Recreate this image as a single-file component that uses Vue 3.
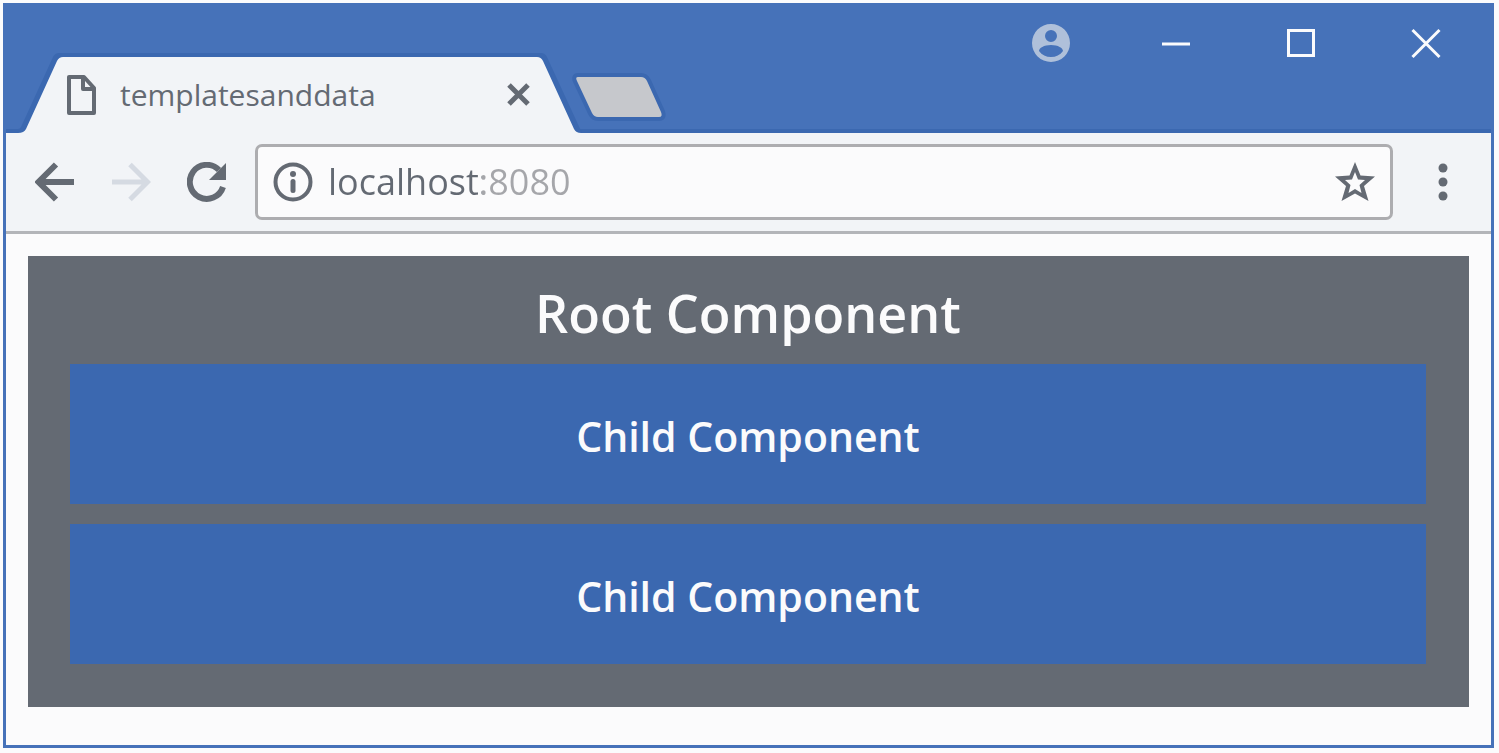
<script setup>
import { ref } from 'vue'

const address = ref('localhost:8080')
const children = ['Child Component', 'Child Component']
</script>

<template>
  <div class="window">
    <header class="titlebar">
      <div class="tab">
        <svg class="tab-shape" viewBox="0 0 564 81" preserveAspectRatio="none" aria-hidden="true">
          <path class="tab-edge" d="M0 81 V77 H12 Q14 77 15 75 L47 5 Q49 1 53 1 H535 Q539 1 541 5 L576 81 Z" />
          <path class="tab-fill" d="M12 81 Q18 81 20 77 L51 9 Q53 5 57 5 H531 Q535 5 537 9 L568 77 Q570 81 575 81 Z" />
        </svg>
        <svg class="page-icon" viewBox="0 0 30 40" aria-hidden="true">
          <path d="M3 2 H18 L28 13 V38 H3 Z" />
          <path d="M17 3 V14 H27" />
        </svg>
        <span class="tab-title">templatesanddata</span>
        <button class="plain tab-close" type="button" aria-label="Close tab">
          <svg viewBox="0 0 24 24"><path d="M2 2 L21 21 M21 2 L2 21" /></svg>
        </button>
      </div>
      <button class="plain new-tab" type="button" aria-label="New tab">
        <svg viewBox="0 0 96 54">
          <path d="M8 7 H71 Q75 7 77 11 L91 42 Q93 47 89 47 H28 Q24 47 22 43 L7 11 Q5 7 8 7 Z" />
        </svg>
      </button>
      <div class="controls">
        <button class="plain control" type="button" aria-label="Profile">
          <svg viewBox="0 0 38 38">
            <path class="person" fill-rule="evenodd" d="M19 0 A19 19 0 1 1 19 38 A19 19 0 1 1 19 0 Z M19 6 A6 6 0 1 0 19 18 A6 6 0 1 0 19 6 Z M19 21 C12 21 7 24 7 27 C10 31 14 33 19 33 C24 33 28 31 31 27 C31 24 26 21 19 21 Z" />
          </svg>
        </button>
        <button class="plain control" type="button" aria-label="Minimize">
          <svg viewBox="0 0 38 38"><path d="M5 20 H33" /></svg>
        </button>
        <button class="plain control" type="button" aria-label="Maximize">
          <svg viewBox="0 0 38 38"><path d="M6.500 6.500 H31.500 V31.500 H6.500 Z" /></svg>
        </button>
        <button class="plain control" type="button" aria-label="Close window">
          <svg viewBox="0 0 38 38"><path d="M5.500 6 L32.500 33 M32.500 6 L5.500 33" /></svg>
        </button>
      </div>
    </header>

    <nav class="toolbar">
      <button class="plain tool" type="button" aria-label="Back">
        <svg viewBox="0 0 40 40"><path class="arrow" d="M39 20 H4 M21 2.500 L3.500 20 L21 37.500" /></svg>
      </button>
      <button class="plain tool" type="button" aria-label="Forward" disabled>
        <svg viewBox="0 0 40 40"><path class="arrow faint" d="M1 20 H36 M19 2.500 L36.500 20 L19 37.500" /></svg>
      </button>
      <button class="plain tool" type="button" aria-label="Reload">
        <svg viewBox="0 0 40 40">
          <path class="arrow" d="M36 25 A17 17 0 1 1 32 8" />
          <path class="solid" d="M39 1 V18 H22 Z" />
        </svg>
      </button>
      <div class="address">
        <svg class="info" viewBox="0 0 40 40" aria-hidden="true">
          <circle class="ring" cx="20" cy="20" r="17.500" />
          <circle class="solid" cx="20" cy="12" r="3" />
          <path class="stem" d="M20 19.500 V28.500" />
        </svg>
        <input v-model="address" class="url" type="text" aria-label="Address" spellcheck="false" />
        <button class="plain star" type="button" aria-label="Bookmark">
          <svg viewBox="0 0 40 40">
            <path class="solid" fill-rule="evenodd" d="M20 0 L25.500 13.500 L40 14.500 L29 24 L33.500 39 L20 31.500 L6.500 39 L11 24 L0 14.500 L14.500 13.500 Z M20 10 L17 17.500 L10 18 L15.500 23 L13.500 31 L20 27 L26.500 31 L24.500 23 L30 18 L23 17.500 Z" />
          </svg>
        </button>
      </div>
      <button class="plain menu" type="button" aria-label="Menu">
        <svg viewBox="0 0 10 38">
          <circle cx="5" cy="5" r="4.500" /><circle cx="5" cy="19" r="4.500" /><circle cx="5" cy="33" r="4.500" />
        </svg>
      </button>
    </nav>

    <main class="page">
      <section class="root">
        <h1>Root Component</h1>
        <div v-for="(label, i) in children" :key="i" class="child">{{ label }}</div>
      </section>
    </main>
  </div>
</template>

<style>
html,
body {
  background: #fbfbfc;
}
</style>

<style scoped>
.window {
  box-sizing: border-box;
  margin: 3px 5px 5px 3px;
  border: 3px solid #4672b9;
  background: #fbfbfc;
  font-family: "Open Sans", "Noto Sans", sans-serif;
  color: #646a73;
}
svg {
  display: block;
  fill: none;
}
.plain {
  display: block;
  flex: none;
  padding: 0;
  border: 0;
  background: none;
}
.titlebar {
  display: flex;
  align-items: flex-end;
  height: 127px;
  background: #4672b9;
  box-shadow: inset 0 -4px #3b68b0;
}
.tab {
  position: relative;
  display: flex;
  align-items: center;
  box-sizing: border-box;
  width: 564px;
  height: 81px;
  padding: 5px 39px 0 60px;
}
.tab-shape {
  position: absolute;
  inset: 0;
  width: 100%;
  height: 100%;
  overflow: visible;
}
.tab-edge {
  fill: #3b68b0;
}
.tab-fill {
  fill: #f2f4f7;
}
.page-icon {
  position: relative;
  width: 30px;
  height: 40px;
  stroke: #646a73;
  stroke-width: 4;
  stroke-linejoin: round;
}
.tab-title {
  position: relative;
  flex: 1;
  margin-left: 24px;
  font-size: 30px;
  font-weight: 500;
  line-height: 44px;
}
.tab-close {
  position: relative;
}
.tab-close svg {
  width: 24px;
  height: 24px;
  stroke: #646a73;
  stroke-width: 5;
}
.new-tab {
  margin-bottom: 9px;
}
.new-tab svg {
  width: 96px;
  height: 54px;
  fill: #c6c8cc;
  stroke: #3b68b0;
  stroke-width: 8;
  stroke-linejoin: round;
  paint-order: stroke;
}
.controls {
  display: flex;
  gap: 87px;
  align-self: flex-start;
  margin: 18px 46px 0 auto;
}
.control svg {
  width: 38px;
  height: 38px;
  stroke: #fbfbfc;
  stroke-width: 3;
}
.control .person {
  fill: #afc0da;
  stroke: none;
}
.toolbar {
  display: flex;
  align-items: center;
  height: 98px;
  padding: 0 43px 0 29px;
  gap: 36px;
  border-bottom: 3px solid #b3b5b9;
  background: #f2f4f7;
}
.tool svg,
.info {
  width: 40px;
  height: 40px;
}
.arrow {
  stroke: #646a73;
  stroke-width: 6;
}
.faint {
  stroke: #d5dae2;
  stroke-width: 5;
}
.solid {
  fill: #646a73;
}
.address {
  display: flex;
  flex: 1;
  align-items: center;
  box-sizing: border-box;
  height: 76px;
  margin-left: -8px;
  padding: 0 15px;
  border: 3px solid #adadb0;
  border-radius: 7px;
  background: #fbfbfc;
}
.info {
  flex: none;
}
.ring {
  stroke: #646a73;
  stroke-width: 4;
}
.stem {
  stroke: #646a73;
  stroke-width: 5;
  stroke-linecap: round;
}
.url {
  flex: 1;
  min-width: 0;
  height: 52px;
  margin-left: 15px;
  padding: 0;
  border: 0;
  outline: 0;
  background: linear-gradient(to right, #646a73 154px, #a5a6aa 154px);
  background-clip: text;
  color: transparent;
  font: 36px/52px "Open Sans", "Noto Sans", sans-serif;
}
.star svg {
  width: 40px;
  height: 40px;
}
.menu {
  margin-left: 9px;
}
.menu svg {
  width: 10px;
  height: 38px;
  fill: #646a73;
}
.page {
  padding: 22px 22px 38px;
}
.root {
  padding: 20px 43px 43px 42px;
  background: #646a73;
  color: #fbfbfc;
  text-align: center;
}
h1 {
  margin: 0 0 14px;
  font-size: 52px;
  font-weight: 600;
  line-height: 74px;
}
.child {
  padding-top: 4px;
  background: #3b68b0;
  font-size: 41px;
  font-weight: 600;
  line-height: 136px;
}
.child + .child {
  margin-top: 20px;
}
</style>
